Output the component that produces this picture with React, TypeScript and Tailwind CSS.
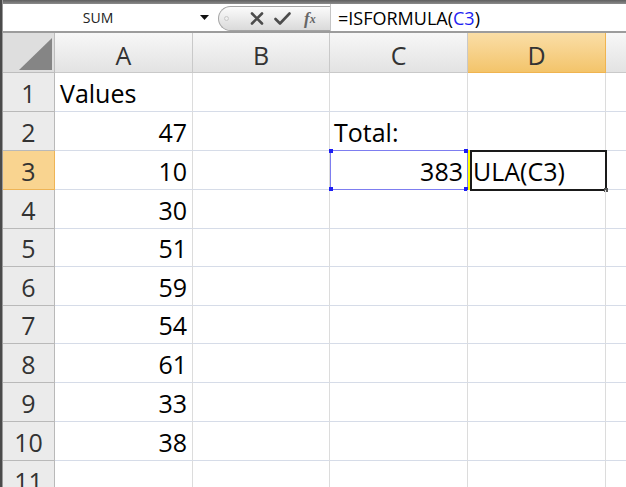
import React from "react";

type Row = { n: number; a?: string; c?: string; h: string };

const rows: Row[] = [
  { n: 1, a: "Values", h: "h-[39px]" },
  { n: 2, a: "47", c: "Total:", h: "h-[39px]" },
  { n: 3, a: "10", c: "383", h: "h-[39px]" },
  { n: 4, a: "30", h: "h-[39px]" },
  { n: 5, a: "51", h: "h-[38px]" },
  { n: 6, a: "59", h: "h-[39px]" },
  { n: 7, a: "54", h: "h-[38px]" },
  { n: 8, a: "61", h: "h-[39px]" },
  { n: 9, a: "33", h: "h-[39px]" },
  { n: 10, a: "38", h: "h-[39px]" },
  { n: 11, h: "h-[39px]" },
];

const cols = [
  { k: "A", w: "w-[138px]" },
  { k: "B", w: "w-[137px]" },
  { k: "C", w: "w-[138px]" },
  { k: "D", w: "w-[138px]" },
];

const FormulaBar = () => (
  <div className="flex h-[29px] shrink-0 items-stretch border-b-2 border-[#9c9c9c] bg-white">
    <div className="flex w-[190px] items-center justify-center text-[14px] text-[#222]">SUM</div>
    <div className="flex w-[25px] items-center pl-[7px]">
      <svg width="9" height="5" viewBox="0 0 9 5">
        <polygon points="0,0 9,0 4.5,5" fill="#111" />
      </svg>
    </div>
    <div className="mt-[2px] flex w-[112px] items-center rounded-l-[13px] border border-r-0 border-[#a4a4a4] bg-gradient-to-b from-[#fbfbfb] to-[#dadada]">
      <div className="ml-[5px] h-[5px] w-[5px] rounded-full border border-[#c8c8c8] bg-[#eee]" />
      <svg className="ml-[21px]" width="14" height="13" viewBox="0 0 14 13">
        <path d="M2 1.5 L12 11.5 M12 1.5 L2 11.5" stroke="#4c4c4c" strokeWidth="2.6" strokeLinecap="round" />
      </svg>
      <svg className="ml-[10px]" width="17" height="13" viewBox="0 0 17 13">
        <path d="M1.5 7 L6 11.5 L15.5 1.5" stroke="#4c4c4c" strokeWidth="2.6" fill="none" strokeLinecap="round" strokeLinejoin="round" />
      </svg>
      <div className="ml-[10px] flex h-full flex-1 items-center pl-[3px] font-['Liberation_Serif',serif] text-[17px] font-bold italic text-[#666]">
        f<span className="text-[12px]">x</span>
      </div>
    </div>
    <div className="flex flex-1 items-center border-l border-[#c4c4c4] pl-[7px] text-[18px] text-black">
      =ISFORMULA(<span className="text-[#1f1ff2]">C3</span>)
    </div>
  </div>
);

const HeaderRow = () => (
  <div className="flex h-[40px] shrink-0">
    <div className="flex w-[52px] items-end justify-end border-r border-b border-[#bdbdbd] bg-[#dedede] pr-[2px] pb-[2px]">
      <svg width="33" height="32" viewBox="0 0 33 32">
        <polygon points="33,0 33,32 0,32" fill="#858585" />
      </svg>
    </div>
    {cols.map((c) => (
      <div
        key={c.k}
        className={
          c.k === "D"
            ? `${c.w} flex items-end justify-center border-r border-b border-[#f0b450] bg-gradient-to-b from-[#fadea6] to-[#f3c46a] pb-[4px] text-[#333]`
            : `${c.w} flex items-end justify-center border-r border-b border-[#c9c9c9] bg-gradient-to-b from-[#f7f7f7] to-[#e3e3e3] pb-[4px] text-[#333]`
        }
      >
        {c.k}
      </div>
    ))}
    <div className="flex-1 border-b border-[#c9c9c9] bg-gradient-to-b from-[#f7f7f7] to-[#e3e3e3]" />
  </div>
);

const GridRow = ({ r }: { r: Row }) => {
  const active = r.n === 3;
  return (
    <div className={`flex shrink-0 ${r.h}`}>
      <div
        className={
          active
            ? "flex w-[52px] items-end justify-center border-r border-b border-[#eeb456] bg-[#f9d490] pb-[5px] text-[#333]"
            : "flex w-[52px] items-end justify-center border-r border-b border-[#b9b9b9] bg-[#ebebeb] pb-[5px] text-[#333]"
        }
      >
        {r.n}
      </div>
      <div className="flex w-[138px] items-end border-r border-b border-r-[#dcdcdc] border-b-[#d6dce8] px-[5px] pb-[5px]">
        <span className={r.n === 1 ? "" : "ml-auto"}>{r.a}</span>
      </div>
      <div className="w-[137px] border-r border-b border-r-[#dcdcdc] border-b-[#d6dce8]" />
      <div className="relative flex w-[138px] items-end border-r border-b border-r-[#dcdcdc] border-b-[#d6dce8] px-[4px] pb-[5px]">
        <span className={r.n === 3 ? "ml-auto" : ""}>{r.c}</span>
        {active && (
          <>
            <div className="absolute left-0 top-[-1px] h-[40px] w-[138px] border border-[#7d7df0]" />
            <div className="absolute left-[-1px] top-[-2px] h-[4px] w-[4px] bg-[#1e1ef4]" />
            <div className="absolute right-[-1px] top-[-2px] h-[4px] w-[4px] bg-[#1e1ef4]" />
            <div className="absolute bottom-[-2px] left-[-1px] h-[4px] w-[4px] bg-[#1e1ef4]" />
            <div className="absolute bottom-[-2px] right-[-1px] h-[4px] w-[4px] bg-[#1e1ef4]" />
          </>
        )}
      </div>
      <div className="relative flex w-[138px] items-end border-r border-b border-r-[#dcdcdc] border-b-[#d6dce8] pl-[5px] pb-[5px]">
        {active && (
          <>
            <div className="absolute left-0 top-[-1px] h-[40px] w-[2px] bg-[#ffff00]" />
            <div className="absolute left-[2px] top-[-1px] h-[41px] w-[137px] border-2 border-[#1a1a1a]" />
            <div className="absolute bottom-[-3px] right-[-3px] h-[4px] w-[4px] bg-[#555]" />
            <span className="relative">ULA(C3)</span>
          </>
        )}
      </div>
      <div className="flex-1 border-b border-[#d6dce8]" />
    </div>
  );
};

export default function App() {
  return (
    <div className="flex h-[487px] w-[626px] overflow-hidden bg-white font-['Open_Sans',sans-serif] text-[25px] leading-none text-black">
      <div className="flex w-[3px] shrink-0">
        <div className="w-[2px] bg-[#4a4a4a]" />
        <div className="w-[1px] bg-[#9a9a9a]" />
      </div>
      <div className="flex flex-1 flex-col">
        <div className="h-[4px] shrink-0 bg-gradient-to-b from-[#5f5f5f] to-[#8c8c8c]" />
        <FormulaBar />
        <HeaderRow />
        {rows.map((r) => (
          <GridRow key={r.n} r={r} />
        ))}
      </div>
    </div>
  );
}
